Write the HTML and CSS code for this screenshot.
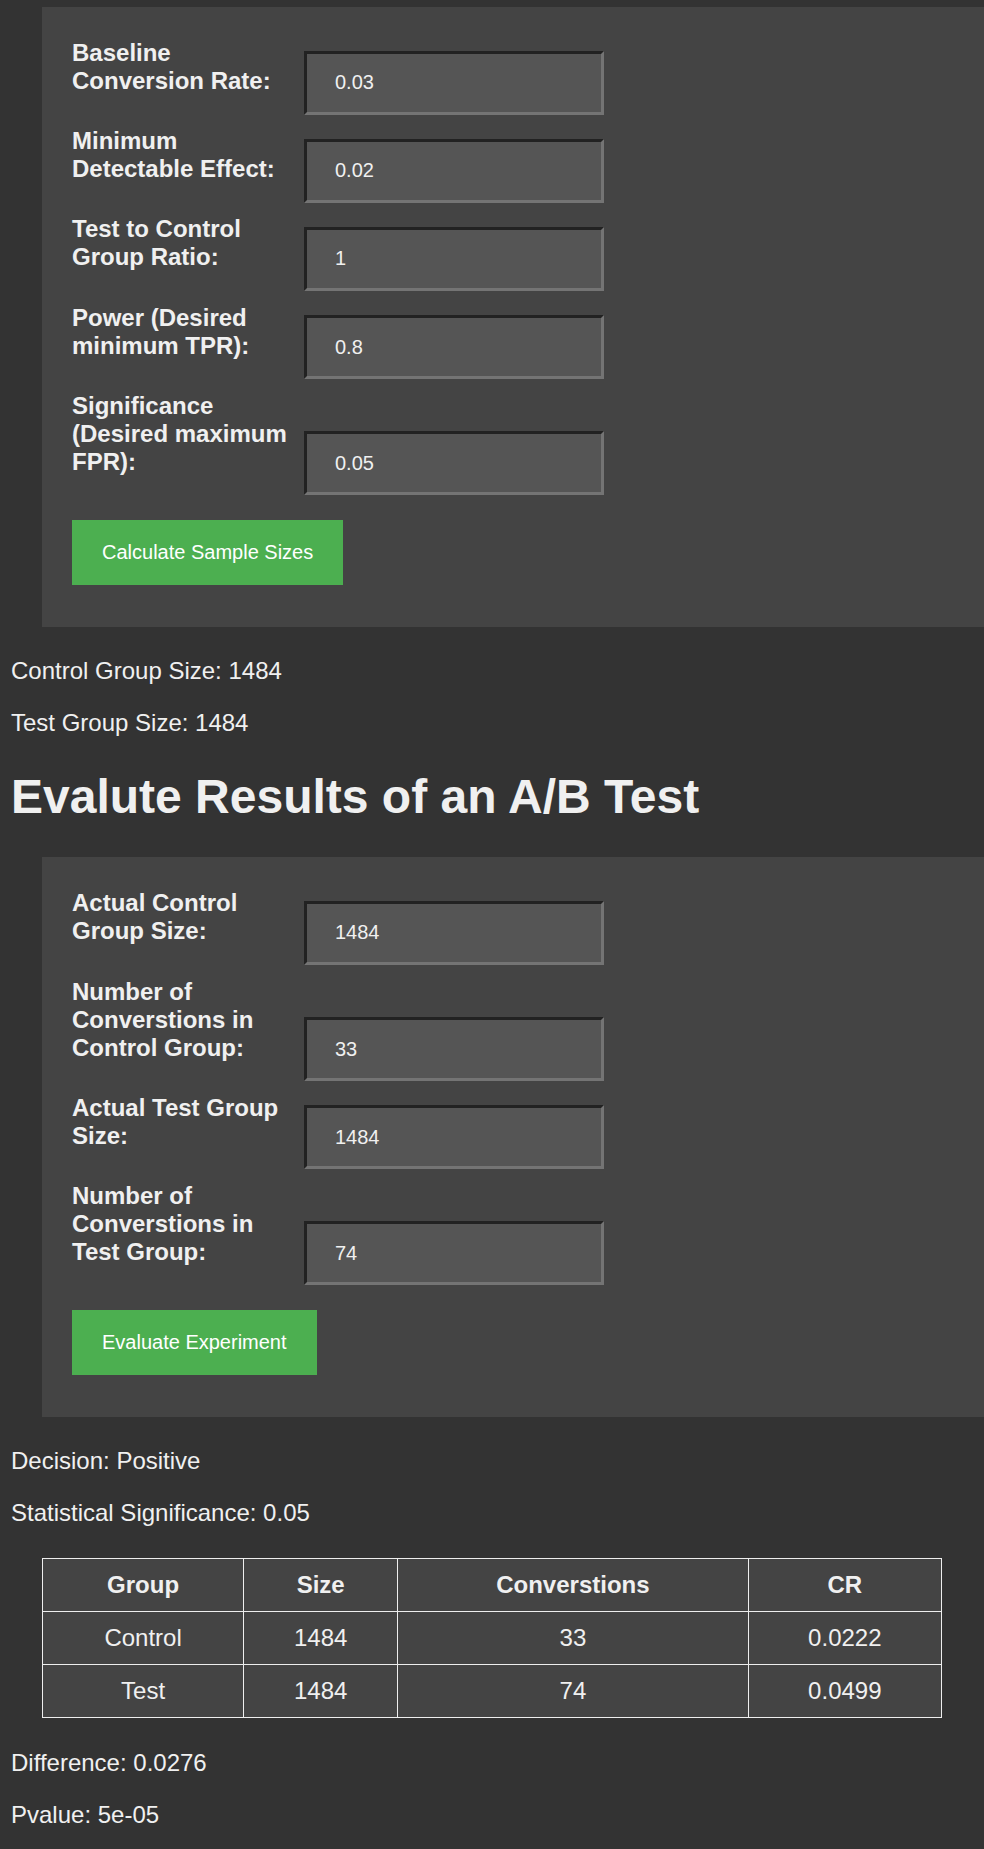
FILE: index.html
```html
<!DOCTYPE html>
<html lang="en">
<head>
<meta charset="utf-8">
<title>A/B Test Calculator</title>
<link rel="stylesheet" href="styles.css">
</head>
<body>
<main class="page">
  <form class="panel">
    <div class="row"><label class="field-label">Baseline Conversion Rate:</label><input class="field-input" type="text" value="0.03"></div>
    <div class="row"><label class="field-label">Minimum Detectable Effect:</label><input class="field-input" type="text" value="0.02"></div>
    <div class="row"><label class="field-label">Test to Control Group Ratio:</label><input class="field-input" type="text" value="1"></div>
    <div class="row"><label class="field-label">Power (Desired minimum TPR):</label><input class="field-input" type="text" value="0.8"></div>
    <div class="row"><label class="field-label">Significance (Desired maximum FPR):</label><input class="field-input" type="text" value="0.05"></div>
    <button class="btn" type="button">Calculate Sample Sizes</button>
  </form>

  <p class="result">Control Group Size: 1484</p>
  <p class="result">Test Group Size: 1484</p>

  <h1 class="title">Evalute Results of an A/B Test</h1>

  <form class="panel panel-eval">
    <div class="row"><label class="field-label">Actual Control Group Size:</label><input class="field-input" type="text" value="1484"></div>
    <div class="row"><label class="field-label">Number of Converstions in Control Group:</label><input class="field-input" type="text" value="33"></div>
    <div class="row"><label class="field-label">Actual Test Group Size:</label><input class="field-input" type="text" value="1484"></div>
    <div class="row"><label class="field-label">Number of Converstions in Test Group:</label><input class="field-input" type="text" value="74"></div>
    <button class="btn" type="button">Evaluate Experiment</button>
  </form>

  <p class="result">Decision: Positive</p>
  <p class="result">Statistical Significance: 0.05</p>

  <table class="results-table">
    <thead>
      <tr><th>Group</th><th>Size</th><th>Converstions</th><th>CR</th></tr>
    </thead>
    <tbody>
      <tr><td>Control</td><td>1484</td><td>33</td><td>0.0222</td></tr>
      <tr><td>Test</td><td>1484</td><td>74</td><td>0.0499</td></tr>
    </tbody>
  </table>

  <p class="result">Difference: 0.0276</p>
  <p class="result">Pvalue: 5e-05</p>
</main>
</body>
</html>
```

FILE: styles.css
```css
html, body {
  margin: 0;
  padding: 0;
  background: #333333;
}

body {
  font-family: "Liberation Sans", Arial, sans-serif;
  font-size: 24px;
  color: #f0f0f0;
}

.page {
  padding: 7px 9px 0 11px;
}

.panel {
  display: block;
  background: #444444;
  margin: 0 -9px 30px 31px;
  padding: 32px 30px 30px 30px;
}

.panel-eval {
  margin-top: 33px;
}

.row {
  margin-bottom: 12.7px;
}

.field-label {
  display: inline-block;
  width: 232px;
  font-weight: bold;
  font-size: 24px;
  vertical-align: baseline;
}

.field-input {
  box-sizing: border-box;
  width: 300px;
  height: 64px;
  padding: 0 28px;
  margin: 0;
  font-family: "Liberation Sans", Arial, sans-serif;
  font-size: 20px;
  color: #f0f0f0;
  background: #555555;
  border-style: solid;
  border-width: 3px;
  border-color: #222222 #747474 #747474 #222222;
  outline: none;
  vertical-align: baseline;
}

.btn {
  display: block;
  margin: 25px 0 12px 0;
  padding: 21px 30px;
  border: none;
  background: #4caf50;
  color: #ffffff;
  font-family: "Liberation Sans", Arial, sans-serif;
  font-size: 20px;
  line-height: 23px;
  cursor: pointer;
}

.result {
  margin: 24px 0;
}

.title {
  font-size: 48px;
  font-weight: bold;
  margin: 32.16px 0;
}

.results-table {
  width: 900px;
  margin: 31px 0 31px 31px;
  border-collapse: collapse;
  background: #444444;
}

.results-table th,
.results-table td {
  border: 1px solid #eeeeee;
  padding: 12px;
  line-height: 28px;
  text-align: center;
  font-size: 24px;
}

.results-table th {
  font-weight: bold;
}
```
